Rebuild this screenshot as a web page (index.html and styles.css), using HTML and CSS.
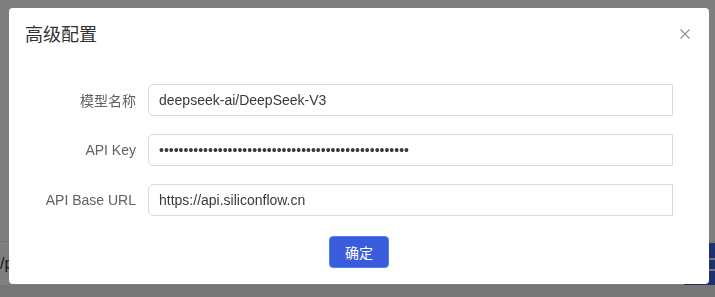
FILE: index.html
```html
<!DOCTYPE html>
<html lang="zh">
<head>
<meta charset="utf-8">
<title>高级配置</title>
<link rel="stylesheet" href="styles.css">
</head>
<body>
<div class="page">
  <div class="page-top"></div>
  <div class="composer">
    <div class="composer-input"><span class="composer-text">/p</span></div>
    <div class="composer-send"><span class="send-line"></span><span class="send-line"></span></div>
  </div>
  <div class="page-bottom"></div>
</div>

<div class="overlay">
  <div class="dialog">
    <div class="dialog-header">
      <span class="dialog-title">高级配置</span>
      <button class="dialog-close" aria-label="关闭">
        <svg width="10" height="10" viewBox="0 0 10 10"><path d="M0.5 0.5L9.5 9.5M9.5 0.5L0.5 9.5" stroke="#8c8f96" stroke-width="1.1" fill="none"/></svg>
      </button>
    </div>
    <div class="dialog-body">
      <label class="form-label">模型名称</label>
      <input class="form-input" type="text" value="deepseek-ai/DeepSeek-V3">
      <label class="form-label">API Key</label>
      <input class="form-input" type="password" value="sk-abcdefghijklmnopqrstuvwxyz0123456789abcdefghijkl">
      <label class="form-label">API Base URL</label>
      <input class="form-input" type="text" value="https://api.siliconflow.cn">
    </div>
    <div class="dialog-footer">
      <button class="btn-primary">确定</button>
    </div>
  </div>
</div>
</body>
</html>
```

FILE: styles.css
```css
* { box-sizing: border-box; }
html, body { margin: 0; padding: 0; }
body {
  width: 715px;
  height: 297px;
  overflow: hidden;
  font-family: "Liberation Sans", "Noto Sans CJK SC", sans-serif;
  background: #ffffff;
}
.page {
  display: flex;
  flex-direction: column;
  height: 297px;
}
.page-top { height: 241px; background: #ffffff; }
.composer {
  height: 44px;
  display: flex;
  border-top: 1px solid #e2e2e2;
  background: #ffffff;
}
.composer-input {
  flex: 1;
  display: flex;
  align-items: center;
  overflow: hidden;
  font-size: 16px;
  color: #333;
}
.composer-text { margin-left: 0; }
.composer-send {
  width: 40px;
  margin: 1px -9px 0 0;
  background: #3c5fdf;
  border-radius: 4px 0 0 0;
  display: flex;
  flex-direction: column;
  justify-content: center;
  gap: 9px;
  padding-left: 18px;
}
.send-line { height: 2px; background: #e6e9f5; display: block; }
.page-bottom { flex: 1; background: #ececec; }

.overlay {
  position: fixed;
  inset: 0;
  background: rgba(0, 0, 0, 0.5);
  padding: 8px 0 0 9px;
}
.dialog {
  width: 700px;
  height: 276px;
  background: #ffffff;
  border-radius: 4px;
  display: flex;
  flex-direction: column;
}
.dialog-header {
  display: flex;
  justify-content: space-between;
  align-items: center;
  padding: 16px 19px 0 16px;
  height: 38px;
}
.dialog-title {
  font-size: 18px;
  line-height: 22px;
  color: #303133;
}
.dialog-close {
  border: 0;
  background: none;
  padding: 0;
  width: 10px;
  height: 10px;
  display: flex;
  margin-top: -3px;
}
.dialog-body {
  display: grid;
  grid-template-columns: 107px 525px;
  column-gap: 12px;
  row-gap: 18px;
  align-items: center;
  padding: 38px 36px 0 20px;
}
.form-label {
  text-align: right;
  font-size: 14px;
  color: #606266;
}
.form-input {
  height: 32px;
  width: 525px;
  border: 1px solid #d9d9e3;
  border-radius: 5px 0 0 5px;
  padding: 0 10px;
  font-family: "Liberation Sans", "Noto Sans CJK SC", sans-serif;
  font-size: 14px;
  color: #3a3a3a;
  outline: none;
  background: #fff;
}
.dialog-footer {
  display: flex;
  justify-content: center;
  padding-top: 20px;
}
.btn-primary {
  width: 60px;
  height: 32px;
  background: #3a5cdc;
  border: 1px solid #4a86ee;
  border-radius: 4px;
  color: #ffffff;
  font-family: "Liberation Sans", "Noto Sans CJK SC", sans-serif;
  font-size: 14px;
  padding: 0;
}
```
